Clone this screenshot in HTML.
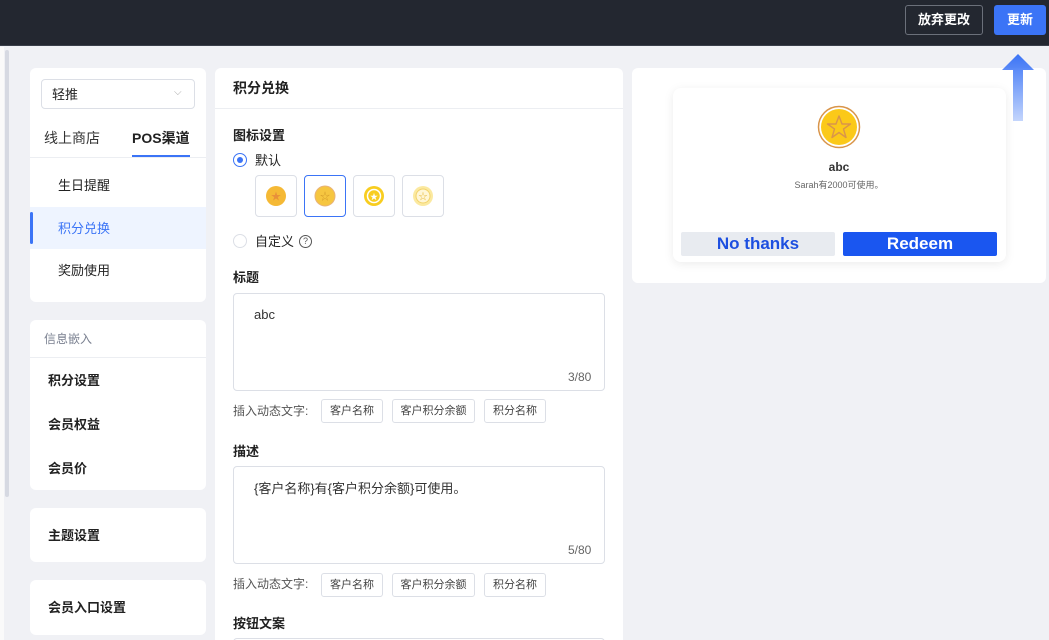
<!DOCTYPE html>
<html style="width:1049px;height:640px;overflow:hidden"><head><meta charset="utf-8"><style>
*{box-sizing:border-box;margin:0;padding:0}
body{width:1049px;height:640px;overflow:hidden;background:#f0f1f5;font-family:"Liberation Sans","Noto Sans CJK SC",sans-serif;color:#222;position:relative;font-size:13px}
.a{position:absolute}
.card{position:absolute;background:#fff;border-radius:6px}
.top{left:0;top:0;width:1049px;height:46px;background:#232730;border-bottom:1px solid #3a3f4a}
.t{position:absolute;white-space:nowrap;line-height:1}
.b{font-weight:bold}
.box{position:absolute;border:1px solid #dcdfe6;border-radius:4px;background:#fff}
.tag{position:absolute;height:24px;border:1px solid #dcdfe6;border-radius:3px;font-size:11px;color:#444;text-align:center;line-height:22px;background:#fff}
</style></head><body>
<div class="a top"></div>
<div class="a" style="left:905px;top:5px;width:78px;height:30px;border:1px solid #6b707a;border-radius:3px;color:#fff;font-size:13px;font-weight:bold;text-align:center;line-height:28px">放弃更改</div>
<div class="a" style="left:994px;top:5px;width:52px;height:30px;background:#3b74f6;border-radius:3px;color:#fff;font-size:13px;font-weight:bold;text-align:center;line-height:30px">更新</div>
<div class="a" style="left:0;top:47px;width:4px;height:593px;background:#fafafa"></div>
<div class="a" style="left:5px;top:50px;width:4px;height:447px;background:#d6d9e2;border-radius:2px"></div>

<div class="card" style="left:30px;top:68px;width:176px;height:234px"></div>
<div class="box" style="left:41px;top:79px;width:154px;height:30px"></div>
<div class="t" style="left:52px;top:88px;font-size:13px">轻推</div>
<div class="t" style="left:174px;top:88px;font-size:10px;color:#aaa">⌵</div>
<div class="t" style="left:44px;top:131px;font-size:14px;color:#333">线上商店</div>
<div class="t b" style="left:132px;top:131px;font-size:14px">POS渠道</div>
<div class="a" style="left:30px;top:157px;width:176px;height:1px;background:#eceef2"></div>
<div class="a" style="left:132px;top:155px;width:58px;height:2px;background:#3b74f6"></div>
<div class="t" style="left:58px;top:179px;font-size:13px">生日提醒</div>
<div class="a" style="left:30px;top:207px;width:176px;height:42px;background:#eef4ff"></div>
<div class="a" style="left:30px;top:212px;width:3px;height:32px;background:#3b74f6;border-radius:2px"></div>
<div class="t" style="left:58px;top:222px;font-size:13px;color:#3b74f6">积分兑换</div>
<div class="t" style="left:58px;top:264px;font-size:13px">奖励使用</div>

<div class="card" style="left:30px;top:320px;width:176px;height:170px"></div>
<div class="t" style="left:44px;top:333px;font-size:12px;color:#7a8090">信息嵌入</div>
<div class="a" style="left:30px;top:357px;width:176px;height:1px;background:#eceef2"></div>
<div class="t b" style="left:48px;top:374px;font-size:13px">积分设置</div>
<div class="t b" style="left:48px;top:418px;font-size:13px">会员权益</div>
<div class="t b" style="left:48px;top:462px;font-size:13px">会员价</div>
<div class="card" style="left:30px;top:508px;width:176px;height:54px"></div>
<div class="t b" style="left:48px;top:529px;font-size:13px">主题设置</div>
<div class="card" style="left:30px;top:580px;width:176px;height:55px"></div>
<div class="t b" style="left:48px;top:601px;font-size:13px">会员入口设置</div>

<div class="card" style="left:215px;top:68px;width:408px;height:600px"></div>
<div class="t b" style="left:233px;top:81px;font-size:14px">积分兑换</div>
<div class="a" style="left:215px;top:108px;width:408px;height:1px;background:#eceef2"></div>
<div class="t b" style="left:233px;top:129px;font-size:13px">图标设置</div>
<div class="a" style="left:233px;top:153px;width:14px;height:14px;border-radius:50%;border:1px solid #3b74f6;background:#fff"><div class="a" style="left:3px;top:3px;width:6px;height:6px;border-radius:50%;background:#3b74f6"></div></div>
<div class="t" style="left:255px;top:154px;font-size:13px">默认</div>
<div class="box" style="left:255px;top:175px;width:42px;height:42px"></div>
<div class="box" style="left:304px;top:175px;width:42px;height:42px;border-color:#3b74f6"></div>
<div class="box" style="left:353px;top:175px;width:42px;height:42px"></div>
<div class="box" style="left:402px;top:175px;width:42px;height:42px"></div>
<svg class="a" style="left:255px;top:175px" width="200" height="42">
<circle cx="21" cy="21" r="10" fill="#f5b935"/><text x="21" y="25" font-size="10" fill="#e8903a" text-anchor="middle">★</text>
<circle cx="70" cy="21" r="10" fill="#f6c640" stroke="#e8b37a" stroke-width="1"/><text x="70" y="25" font-size="10" fill="#d39a2a" text-anchor="middle">☆</text>
<circle cx="119" cy="21" r="10" fill="#f8cd1f"/><circle cx="119" cy="21" r="6.5" fill="none" stroke="#fff" stroke-width="1.5"/><text x="119" y="24.5" font-size="8" fill="#fff" text-anchor="middle">★</text>
<circle cx="168" cy="21" r="10" fill="#fbe9a0"/><circle cx="168" cy="21" r="7" fill="#fff6d6" stroke="#f3d36a"/><text x="168" y="24.5" font-size="9" fill="#e6b93a" text-anchor="middle">☆</text>
</svg>
<div class="a" style="left:233px;top:234px;width:14px;height:14px;border-radius:50%;border:1px solid #dcdfe6"></div>
<div class="t" style="left:255px;top:235px;font-size:13px">自定义</div>
<div class="a" style="left:299px;top:235px;width:13px;height:13px;border-radius:50%;border:1px solid #555;font-size:9px;text-align:center;line-height:11px;color:#555">?</div>
<div class="t b" style="left:233px;top:271px;font-size:13px">标题</div>
<div class="box" style="left:233px;top:293px;width:372px;height:98px"></div>
<div class="t" style="left:254px;top:308px;font-size:13px;color:#333">abc</div>
<div class="t" style="left:568px;top:371px;font-size:12px;color:#666">3/80</div>
<div class="t" style="left:233px;top:405px;font-size:12px;color:#555">插入动态文字:</div>
<div class="tag" style="left:321px;top:399px;width:62px">客户名称</div>
<div class="tag" style="left:392px;top:399px;width:83px">客户积分余额</div>
<div class="tag" style="left:484px;top:399px;width:62px">积分名称</div>
<div class="t b" style="left:233px;top:445px;font-size:13px">描述</div>
<div class="box" style="left:233px;top:466px;width:372px;height:98px"></div>
<div class="t" style="left:254px;top:482px;font-size:13px;color:#333">{客户名称}有{客户积分余额}可使用。</div>
<div class="t" style="left:568px;top:544px;font-size:12px;color:#666">5/80</div>
<div class="t" style="left:233px;top:578px;font-size:12px;color:#555">插入动态文字:</div>
<div class="tag" style="left:321px;top:573px;width:62px">客户名称</div>
<div class="tag" style="left:392px;top:573px;width:83px">客户积分余额</div>
<div class="tag" style="left:484px;top:573px;width:62px">积分名称</div>
<div class="t b" style="left:233px;top:617px;font-size:13px">按钮文案</div>
<div class="box" style="left:233px;top:638px;width:372px;height:20px"></div>

<div class="card" style="left:632px;top:68px;width:414px;height:215px"></div>
<div class="a" style="left:673px;top:88px;width:333px;height:174px;background:#fff;border-radius:8px;box-shadow:0 2px 10px rgba(0,0,0,0.08)"></div>
<svg class="a" style="left:817px;top:105px" width="44" height="44"><circle cx="22" cy="22" r="20.5" fill="#fff" stroke="#d9954a" stroke-width="1.5"/><circle cx="22" cy="22" r="18" fill="#fbc919"/><polygon points="22,11 25,19 33.5,19 26.5,24 29,32.5 22,27.5 15,32.5 17.5,24 10.5,19 19,19" fill="none" stroke="#d9954a" stroke-width="1.4" stroke-linejoin="round"/></svg>
<div class="t b" style="left:0;width:1678px;text-align:center;top:161px;font-size:12px;color:#333">abc</div>
<div class="t" style="left:0;width:1678px;text-align:center;top:181px;font-size:9px;color:#666">Sarah有2000可使用。</div>
<div class="a b" style="left:681px;top:232px;width:154px;height:24px;background:#e8ebf0;border-radius:2px;color:#1d4fe0;font-size:17px;text-align:center;line-height:24px">No thanks</div>
<div class="a b" style="left:843px;top:232px;width:154px;height:24px;background:#1a56f0;border-radius:2px;color:#fff;font-size:17px;text-align:center;line-height:24px">Redeem</div>
<svg class="a" style="left:1002px;top:52px" width="34" height="70"><defs><linearGradient id="g" x1="0" y1="0" x2="0" y2="1"><stop offset="0" stop-color="#3b74f6"/><stop offset="1" stop-color="#3b74f6" stop-opacity="0.3"/></linearGradient></defs><polygon points="16,2 32,18 21,18 21,69 11,69 11,18 0,18" fill="url(#g)"/></svg>
</body></html>
